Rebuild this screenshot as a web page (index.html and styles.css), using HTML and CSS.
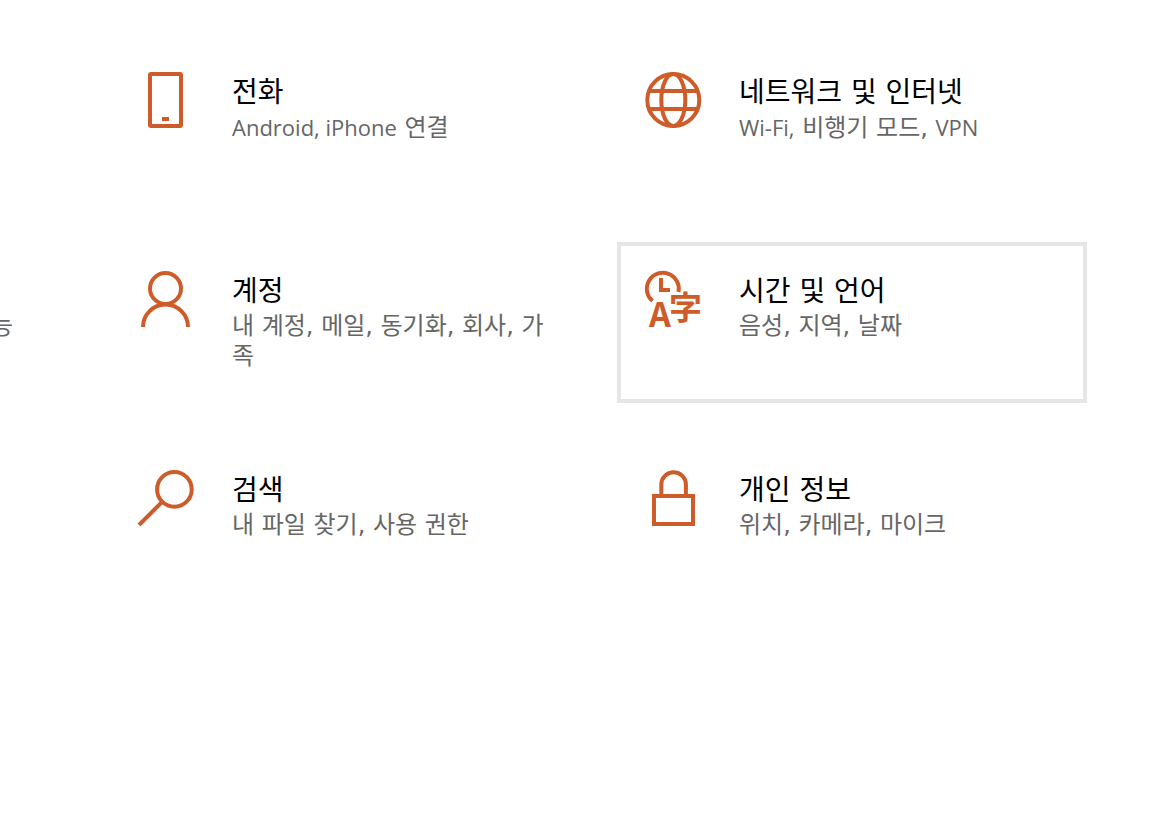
FILE: index.html
```html
<!DOCTYPE html>
<html lang="ko">
<head>
<meta charset="utf-8">
<title>설정</title>
<link rel="stylesheet" href="styles.css">
</head>
<body>
<main class="settings">
  <a class="card card-edge" href="#apps"><span class="desc">능</span></a>

  <a class="card card-phone" href="#phone">
    <svg class="icon" viewBox="0 0 56 56" aria-hidden="true"><rect x="12" y="2" width="31" height="52" rx="1"/><path d="M24 47h7"/></svg>
    <span class="text"><span class="title">전화</span><span class="desc"><span class="en">Android, iPhone</span> 연결</span></span>
  </a>
  <a class="card card-network" href="#network">
    <svg class="icon" viewBox="0 0 56 56" aria-hidden="true"><circle cx="28.3" cy="28" r="26"/><ellipse cx="28.3" cy="28" rx="12" ry="26"/><path d="M4 19h48M4 37h48"/></svg>
    <span class="text"><span class="title">네트워크 및 인터넷</span><span class="desc"><span class="en">Wi-Fi,</span> 비행기 모드, <span class="en">VPN</span></span></span>
  </a>

  <a class="card card-account" href="#accounts">
    <svg class="icon" viewBox="0 0 56 56" aria-hidden="true"><circle cx="27.5" cy="17.5" r="15.5"/><path d="M5 56a22.5 22.5 0 0 1 45 0"/></svg>
    <span class="text"><span class="title">계정</span><span class="desc">내 계정, 메일, 동기화, 회사, 가족</span></span>
  </a>
  <a class="card card-time active" href="#time">
    <svg class="icon" viewBox="0 0 56 56" aria-hidden="true"><path d="M7.5 30A16 16 0 1 1 33.5 21"/><path d="M16 7v12h9"/><text class="latin" x="4" y="56">A</text><text class="han" x="24" y="49">字</text></svg>
    <span class="text"><span class="title">시간 및 언어</span><span class="desc">음성, 지역, 날짜</span></span>
  </a>

  <a class="card card-search" href="#search">
    <svg class="icon" viewBox="0 0 56 56" aria-hidden="true"><circle cx="36.4" cy="19.4" r="17.3"/><path d="M24 32L1 55"/></svg>
    <span class="text"><span class="title">검색</span><span class="desc">내 파일 찾기, 사용 권한</span></span>
  </a>
  <a class="card card-privacy" href="#privacy">
    <svg class="icon" viewBox="0 0 56 56" aria-hidden="true"><path d="M9 26h39v28H9zM16.3 26V14.5a12.3 12.3 0 0 1 24.6 0V26"/></svg>
    <span class="text"><span class="title">개인 정보</span><span class="desc">위치, 카메라, 마이크</span></span>
  </a>
</main>
</body>
</html>
```
FILE: styles.css
```css
* { box-sizing: border-box; }
body {
  margin: 0;
  background: #fff;
  overflow-x: hidden;
  font-family: "DejaVu Sans", "Noto Sans CJK KR", sans-serif;
}
.settings {
  display: grid;
  grid-template-columns: repeat(3, 470px);
  grid-auto-rows: minmax(161px, auto);
  gap: 38px 37px;
  justify-content: end;
  padding: 43px 63px 43px 0;
}
.card {
  display: flex;
  gap: 38px;
  padding: 25px 20px 0 24px;
  border: 4px solid transparent;
  color: #000;
  text-decoration: none;
}
.card-edge {
  grid-area: 2 / 1;
  justify-content: flex-end;
  padding: 65px 56px 0 0;
}
.card-phone { grid-area: 1 / 2; }
.card-network { grid-area: 1 / 3; }
.card-account { grid-area: 2 / 2; }
.card-time { grid-area: 2 / 3; }
.card-search { grid-area: 3 / 2; }
.card-privacy { grid-area: 3 / 3; }
.active { border-color: #e6e6e6; }
.icon {
  flex: none;
  width: 56px;
  height: 56px;
  overflow: visible;
  fill: none;
  stroke: #ce5c2a;
  stroke-width: 4;
}
.icon text {
  fill: #ce5c2a;
  stroke: none;
  font-family: "Noto Sans CJK KR", sans-serif;
  font-weight: 700;
}
.latin { font-size: 34px; }
.han { font-size: 33px; }
.text {
  flex: 1;
  min-width: 0;
  padding-top: 2px;
}
.title, .desc { display: block; }
.title {
  margin-bottom: 1px;
  font-size: 28px;
  line-height: 37px;
}
.desc {
  font-size: 24px;
  line-height: 30px;
  color: #666;
}
.en {
  font-family: "Open Sans", sans-serif;
  font-size: 22px;
}
```
